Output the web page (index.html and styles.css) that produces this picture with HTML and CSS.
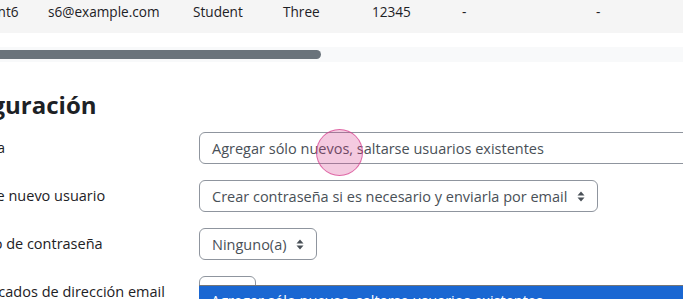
FILE: index.html
```html
<!DOCTYPE html>
<html lang="es">
<head>
    <meta charset="UTF-8">
    <meta name="viewport" content="width=device-width, initial-scale=1.0">
    <title>Subir usuarios - Vista previa</title>
    <link rel="stylesheet" href="styles.css">
</head>
<body>
    <div class="preview">
        <div class="user-row">
            <div class="cell c-user">student6</div>
            <div class="cell c-email">s6@example.com</div>
            <div class="cell c-first">Student</div>
            <div class="cell c-last">Three</div>
            <div class="cell c-id">12345</div>
            <div class="cell c-dash">-</div>
            <div class="cell c-dash2">-</div>
        </div>
        <div class="scrollbar"><div class="thumb"></div></div>
    </div>

    <div class="settings">
        <h2>Configuración</h2>

        <div class="form-row">
            <div class="label">Tipo de subida</div>
            <div class="field">
                <div class="select wide">Agregar sólo nuevos, saltarse usuarios existentes</div>
            </div>
        </div>

        <div class="form-row">
            <div class="label">Contraseña de nuevo usuario</div>
            <div class="field">
                <div class="select">Crear contraseña si es necesario y enviarla por email
                    <svg class="arrows" width="8" height="11" viewBox="0 0 8 11"><path d="M4 0.5 L7.5 4.5 H0.5 Z M4 10.5 L7.5 6.5 H0.5 Z" fill="#495057"/></svg>
                </div>
            </div>
        </div>

        <div class="form-row">
            <div class="label">Forzar cambio de contraseña</div>
            <div class="field">
                <div class="select">Ninguno(a)
                    <svg class="arrows" width="8" height="11" viewBox="0 0 8 11"><path d="M4 0.5 L7.5 4.5 H0.5 Z M4 10.5 L7.5 6.5 H0.5 Z" fill="#495057"/></svg>
                </div>
            </div>
        </div>

        <div class="form-row">
            <div class="label">Permitir duplicados de dirección email</div>
            <div class="field">
                <div class="select small">No</div>
            </div>
        </div>
    </div>

    <div class="click-dot"></div>

    <div class="option-list">
        <div class="option active">Agregar sólo nuevos, saltarse usuarios existentes</div>
        <div class="option">Agregar todos, anexar número a nombres de usuario si es necesario</div>
    </div>
</body>
</html>
```

FILE: styles.css
```css
html, body {
    margin: 0;
    padding: 0;
    overflow: hidden;
}
body {
    width: 683px;
    height: 299px;
    background: #fff;
    color: #1d2125;
    font-family: "Open Sans", "Noto Sans", sans-serif;
    font-size: 14.5px;
    position: relative;
}
.preview {
    height: 62px;
}
.user-row {
    display: flex;
    height: 33px;
    background: #f5f5f5;
    margin-left: -38px;
    font-size: 13.6px;
    line-height: 24px;
    white-space: nowrap;
}
.cell {
    flex: none;
}
.c-user { width: 86px; }
.c-email { width: 145px; }
.c-first { width: 90px; }
.c-last { width: 89px; }
.c-id { width: 90px; }
.c-dash { width: 134px; }
.c-dash2 { width: 60px; }
.scrollbar {
    margin-top: 14px;
    height: 15px;
    background: #f8f9fa;
    position: relative;
}
.thumb {
    position: absolute;
    left: -10px;
    top: 3px;
    width: 331px;
    height: 9px;
    background: #6a737b;
    border-radius: 5px;
}
.settings {
    margin-left: -94px;
}
h2 {
    margin: 26px 0 10px 23px;
    font-size: 24px;
    font-weight: 700;
    line-height: 34px;
}
.form-row {
    display: flex;
    height: 48px;
}
.label {
    width: 293px;
    flex: none;
    line-height: 32px;
    white-space: nowrap;
}
.field {
    flex: none;
}
.select {
    display: inline-flex;
    align-items: center;
    gap: 10px;
    box-sizing: border-box;
    height: 32px;
    padding: 0 12px;
    border: 1px solid #8f959e;
    border-radius: 6px;
    color: #495057;
    white-space: nowrap;
}
.select.wide {
    width: 520px;
}
.select.small {
    width: 57px;
}
.arrows {
    flex: none;
}
.click-dot {
    position: absolute;
    left: 316px;
    top: 129px;
    width: 45px;
    height: 45px;
    border-radius: 50%;
    background: rgba(214, 60, 140, 0.27);
    border: 1.5px solid rgba(214, 60, 140, 0.7);
}
.option-list {
    position: absolute;
    left: 199px;
    top: 285px;
    width: 500px;
    border-top: 1px solid #767676;
    background: #fff;
}
.option {
    padding: 5px 12px;
    line-height: 20px;
    white-space: nowrap;
}
.option.active {
    background: #1a67d2;
    color: #fff;
}
```
